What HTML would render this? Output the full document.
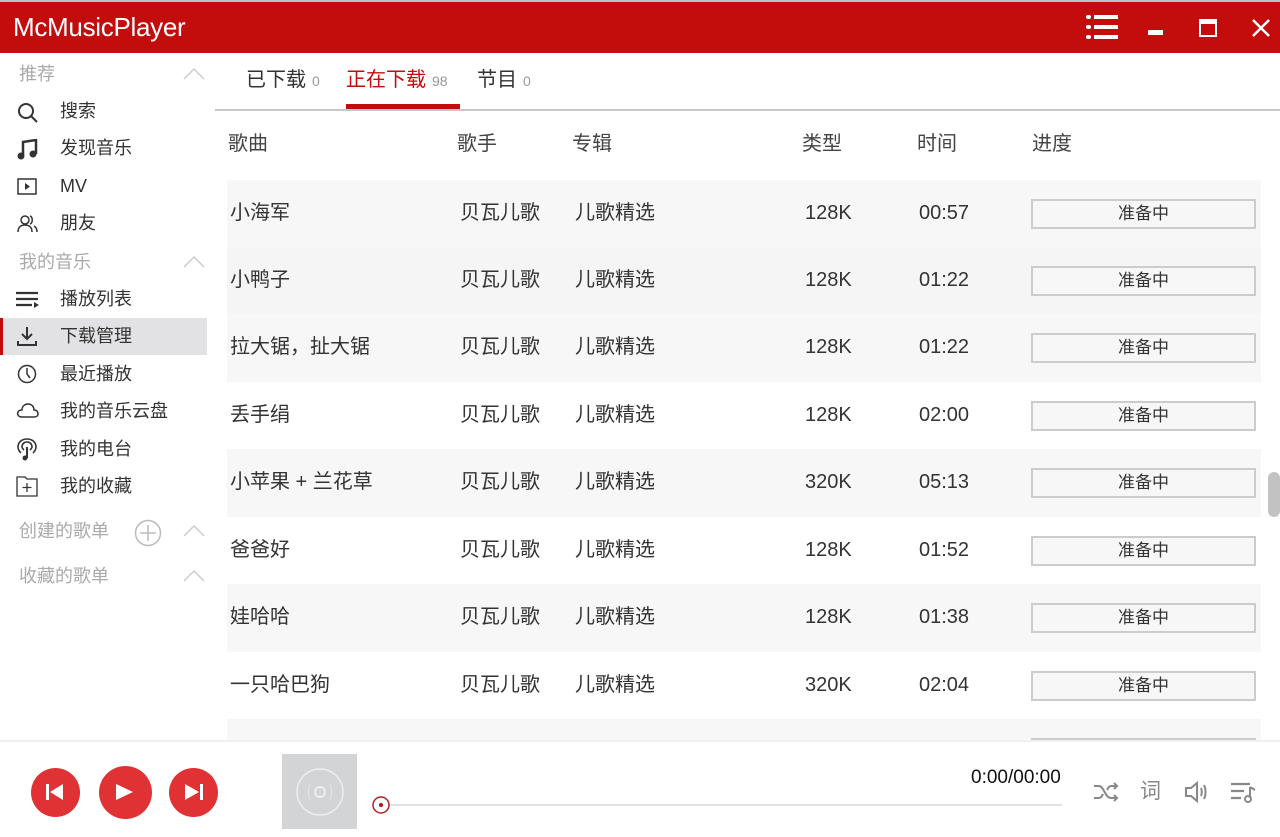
<!DOCTYPE html>
<html><head><meta charset="utf-8"><style>
*{margin:0;padding:0;box-sizing:border-box}
body{width:1280px;height:837px;overflow:hidden;background:#fff;font-family:"Liberation Sans","Noto Sans CJK SC",sans-serif;position:relative;color:#333}
.top{position:absolute;left:0;top:0;width:1280px;height:2px;background:#b8c4cc}
.bar{position:absolute;left:0;top:2px;width:1280px;height:51px;background:#c30d0d}
.title{position:absolute;left:13px;top:12px;color:#fff;font-size:26px;letter-spacing:-0.3px;line-height:30px}
.abs{position:absolute}
.side .h{position:absolute;left:19px;font-size:18px;color:#aaa;line-height:24px}
.side .i{position:absolute;left:60px;font-size:18px;color:#333;line-height:24px}
.chev{position:absolute;left:183px;width:22px;height:12px}
.tab{position:absolute;top:66px;font-size:20px;color:#333;line-height:28px}
.tab small{font-size:14px;color:#999;margin-left:6px}
.hd{position:absolute;top:130px;font-size:20px;color:#444;line-height:28px}
.row{position:absolute;left:227px;width:1034px;height:68px}
.row span{position:absolute;top:19px;font-size:20px;line-height:28px;color:#333}
.row .btn{position:absolute;left:804px;top:19px;width:225px;height:30px;border:2px solid #ccc;background:#f7f7f7;text-align:center;font-size:17px;line-height:26px;color:#333}
.circ{position:absolute;border-radius:50%;background:#e03234}
</style></head><body>
<div class="top"></div>
<div class="bar"></div>
<div class="title">McMusicPlayer</div>
<svg class="abs" style="left:1086px;top:14px" width="34" height="26"><g fill="#fff"><rect x="0" y="1" width="5" height="4" rx="2"/><rect x="0" y="11" width="5" height="4" rx="2"/><rect x="0" y="21" width="5" height="4" rx="2"/><rect x="8" y="1" width="24" height="4"/><rect x="8" y="11" width="24" height="4"/><rect x="8" y="21" width="24" height="4"/></g></svg>
<div class="abs" style="left:1148px;top:30px;width:15px;height:5px;background:#fff"></div>
<div class="abs" style="left:1199px;top:19px;width:18px;height:18px;border:2px solid #fff;border-top-width:5px"></div>
<svg class="abs" style="left:1251px;top:18px" width="20" height="20"><path d="M2 2L18 18M18 2L2 18" stroke="#fff" stroke-width="2.5"/></svg>

<div class="side">
<div class="h" style="top:62px">推荐</div>
<svg class="chev" style="top:68px"><path d="M1 11L11 1L21 11" stroke="#ccc" fill="none" stroke-width="1.5"/></svg>
<svg class="abs" style="left:17px;top:102px" width="22" height="22"><circle cx="9" cy="9" r="7" stroke="#333" stroke-width="2" fill="none"/><path d="M14 14L20 20" stroke="#333" stroke-width="2"/></svg>
<div class="i" style="top:99px">搜索</div>
<svg class="abs" style="left:17px;top:139px" width="22" height="22"><path d="M6 17V3L19 1V15" stroke="#333" stroke-width="2.5" fill="none"/><circle cx="4" cy="17" r="3.5" fill="#333"/><circle cx="16" cy="15" r="3.5" fill="#333"/></svg>
<div class="i" style="top:136px">发现音乐</div>
<svg class="abs" style="left:17px;top:178px" width="22" height="18"><rect x="1" y="1" width="18" height="15" fill="none" stroke="#333" stroke-width="1.5"/><path d="M8 5L13 8.5L8 12Z" fill="#333"/></svg>
<div class="i" style="top:174px">MV</div>
<svg class="abs" style="left:17px;top:214px" width="22" height="20"><circle cx="8" cy="6" r="4" fill="none" stroke="#333" stroke-width="1.5"/><path d="M1 18C1 13 4 11 8 11C12 11 15 13 15 18M13 2C16 3 16 9 13 10M17 12C19 13 20 15 20 18" fill="none" stroke="#333" stroke-width="1.5"/></svg>
<div class="i" style="top:211px">朋友</div>
<div class="h" style="top:250px">我的音乐</div>
<svg class="chev" style="top:256px"><path d="M1 11L11 1L21 11" stroke="#ccc" fill="none" stroke-width="1.5"/></svg>
<svg class="abs" style="left:16px;top:291px" width="24" height="18"><path d="M0 2H22M0 8H22M0 14H16" stroke="#333" stroke-width="2.2"/><path d="M18 11L23 14L18 17Z" fill="#333"/></svg>
<div class="i" style="top:287px">播放列表</div>
<div class="abs" style="left:0;top:318px;width:207px;height:37px;background:#e2e2e4"></div>
<div class="abs" style="left:0;top:318px;width:3px;height:37px;background:#c30d0d"></div>
<svg class="abs" style="left:17px;top:326px" width="22" height="22"><path d="M10 1V13M5 8L10 13L15 8M1 15V19H19V15" stroke="#333" stroke-width="2" fill="none"/></svg>
<div class="i" style="top:324px">下载管理</div>
<svg class="abs" style="left:17px;top:364px" width="22" height="22"><circle cx="10" cy="10" r="8.5" fill="none" stroke="#333" stroke-width="1.5"/><path d="M10 4V10L13 14" stroke="#333" stroke-width="1.5" fill="none"/></svg>
<div class="i" style="top:362px">最近播放</div>
<svg class="abs" style="left:16px;top:402px" width="24" height="18"><path d="M6 15C2 15 1 12 2 10C3 8 5 8 6 8C6 4 9 2 12 2C16 2 18 5 18 8C21 8 22 10 22 12C22 14 20 15 18 15Z" fill="none" stroke="#333" stroke-width="1.5"/></svg>
<div class="i" style="top:399px">我的音乐云盘</div>
<svg class="abs" style="left:17px;top:438px" width="22" height="24"><path d="M4 15C2 13 1 11 1 9C1 4 5 1 10 1C15 1 19 4 19 9C19 11 18 13 16 15M7 12C6 11 5 10 5 9C5 6 7 4 10 4C13 4 15 6 15 9C15 10 14 11 13 12" fill="none" stroke="#333" stroke-width="1.6"/><path d="M10 9V20" stroke="#333" stroke-width="2"/><circle cx="8" cy="20" r="2.5" fill="#333"/></svg>
<div class="i" style="top:437px">我的电台</div>
<svg class="abs" style="left:16px;top:476px" width="24" height="22"><path d="M1 1H9L11 3H21V20H1Z" fill="none" stroke="#333" stroke-width="1.3"/><path d="M11 7V16M6.5 11.5H15.5" stroke="#333" stroke-width="1.3"/></svg>
<div class="i" style="top:474px">我的收藏</div>
<div class="h" style="top:519px">创建的歌单</div>
<svg class="abs" style="left:134px;top:519px" width="28" height="28"><circle cx="14" cy="14" r="12.5" fill="none" stroke="#bbb" stroke-width="1.5"/><path d="M14 6V22M6 14H22" stroke="#bbb" stroke-width="1.5"/></svg>
<svg class="chev" style="top:525px"><path d="M1 11L11 1L21 11" stroke="#ccc" fill="none" stroke-width="1.5"/></svg>
<div class="h" style="top:564px">收藏的歌单</div>
<svg class="chev" style="top:570px"><path d="M1 11L11 1L21 11" stroke="#ccc" fill="none" stroke-width="1.5"/></svg>
</div>

<div class="tab" style="left:246px">已下载<small>0</small></div>
<div class="tab" style="left:346px;color:#c30d0d">正在下载<small>98</small></div>
<div class="tab" style="left:477px">节目<small>0</small></div>
<div class="abs" style="left:215px;top:109px;width:1065px;height:2px;background:#c8c8c8"></div>
<div class="abs" style="left:346px;top:104px;width:114px;height:5px;background:#c30d0d"></div>

<div class="hd" style="left:228px">歌曲</div>
<div class="hd" style="left:457px">歌手</div>
<div class="hd" style="left:572px">专辑</div>
<div class="hd" style="left:802px">类型</div>
<div class="hd" style="left:917px">时间</div>
<div class="hd" style="left:1032px">进度</div>

<div class="row" style="top:180px;background:#f7f7f7"><span style="left:3px">小海军</span><span style="left:233px">贝瓦儿歌</span><span style="left:348px">儿歌精选</span><span style="left:578px">128K</span><span style="left:692px">00:57</span><div class="btn">准备中</div></div>
<div class="row" style="top:247px;background:#f5f5f5"><span style="left:3px">小鸭子</span><span style="left:233px">贝瓦儿歌</span><span style="left:348px">儿歌精选</span><span style="left:578px">128K</span><span style="left:692px">01:22</span><div class="btn">准备中</div></div>
<div class="row" style="top:314px;background:#f7f7f7"><span style="left:3px">拉大锯，扯大锯</span><span style="left:233px">贝瓦儿歌</span><span style="left:348px">儿歌精选</span><span style="left:578px">128K</span><span style="left:692px">01:22</span><div class="btn">准备中</div></div>
<div class="row" style="top:382px;background:#fff"><span style="left:3px">丢手绢</span><span style="left:233px">贝瓦儿歌</span><span style="left:348px">儿歌精选</span><span style="left:578px">128K</span><span style="left:692px">02:00</span><div class="btn">准备中</div></div>
<div class="row" style="top:449px;background:#f7f7f7"><span style="left:3px">小苹果 + 兰花草</span><span style="left:233px">贝瓦儿歌</span><span style="left:348px">儿歌精选</span><span style="left:578px">320K</span><span style="left:692px">05:13</span><div class="btn">准备中</div></div>
<div class="row" style="top:517px;background:#fff"><span style="left:3px">爸爸好</span><span style="left:233px">贝瓦儿歌</span><span style="left:348px">儿歌精选</span><span style="left:578px">128K</span><span style="left:692px">01:52</span><div class="btn">准备中</div></div>
<div class="row" style="top:584px;background:#f7f7f7"><span style="left:3px">娃哈哈</span><span style="left:233px">贝瓦儿歌</span><span style="left:348px">儿歌精选</span><span style="left:578px">128K</span><span style="left:692px">01:38</span><div class="btn">准备中</div></div>
<div class="row" style="top:652px;background:#fff"><span style="left:3px">一只哈巴狗</span><span style="left:233px">贝瓦儿歌</span><span style="left:348px">儿歌精选</span><span style="left:578px">320K</span><span style="left:692px">02:04</span><div class="btn">准备中</div></div>
<div class="row" style="top:719px;height:21px;background:#f7f7f7"><div class="abs" style="left:804px;top:19px;width:225px;height:2px;background:#ccc"></div></div>
<div class="abs" style="left:1268px;top:472px;width:12px;height:45px;background:#c2c2c2;border-radius:6px"></div>

<div class="abs" style="left:0;top:740px;width:1280px;height:2px;background:#f0f0f0"></div>
<div class="circ" style="left:31px;top:768px;width:49px;height:49px"></div>
<div class="circ" style="left:99px;top:766px;width:53px;height:53px"></div>
<div class="circ" style="left:169px;top:768px;width:49px;height:49px"></div>
<svg class="abs" style="left:45px;top:782px" width="22" height="20"><rect x="1" y="2" width="3" height="16" fill="#fff"/><path d="M18 2V18L5 10Z" fill="#fff"/></svg>
<svg class="abs" style="left:115px;top:782px" width="22" height="20"><path d="M1 2V18L18 10Z" fill="#fff"/></svg>
<svg class="abs" style="left:183px;top:782px" width="22" height="20"><rect x="17" y="2" width="3" height="16" fill="#fff"/><path d="M2 2V18L16 10Z" fill="#fff"/></svg>
<div class="abs" style="left:282px;top:754px;width:75px;height:75px;background:#d3d4d6"></div>
<svg class="abs" style="left:282px;top:754px" width="75" height="75"><circle cx="38" cy="38" r="23" fill="none" stroke="#eee" stroke-width="1.5"/><circle cx="38" cy="38" r="5" fill="none" stroke="#eee" stroke-width="2"/><path d="M28 30C26 35 26 41 28 46M48 30C50 35 50 41 48 46" fill="none" stroke="#e4e4e4" stroke-width="1"/></svg>
<div class="abs" style="left:390px;top:804px;width:672px;height:2px;background:#e2e2e2"></div>
<svg class="abs" style="left:370px;top:794px" width="22" height="22"><circle cx="11" cy="11" r="8" fill="#fff" stroke="#b31f24" stroke-width="1.5"/><circle cx="11" cy="11" r="2" fill="#c30d0d"/></svg>
<div class="abs" style="left:971px;top:766px;font-size:19px;color:#111;line-height:24px">0:00/00:00</div>
<svg class="abs" style="left:1093px;top:782px" width="26" height="20"><path d="M1 4H6C11 4 12 16 18 16H24M1 16H6C8 16 9 14 10 12M14 8C15 6 16 4 18 4H24M21 1L24 4L21 7M21 13L24 16L21 19" fill="none" stroke="#888" stroke-width="2"/></svg>
<div class="abs" style="left:1140px;top:778px;font-size:21px;color:#888;line-height:28px">词</div>
<svg class="abs" style="left:1184px;top:781px" width="26" height="22"><path d="M2 7H7L13 2V20L7 15H2Z" fill="none" stroke="#888" stroke-width="2"/><path d="M17 7C18 9 18 13 17 15M20 4C22 8 22 14 20 18" fill="none" stroke="#888" stroke-width="2"/></svg>
<svg class="abs" style="left:1230px;top:781px" width="28" height="22"><path d="M1 3H20M1 10H14M1 17H11" stroke="#888" stroke-width="2.2"/><path d="M20 6V17" stroke="#888" stroke-width="2"/><circle cx="18" cy="18" r="3" fill="none" stroke="#888" stroke-width="2"/><path d="M20 6L25 9" stroke="#888" stroke-width="2"/></svg>
</body></html>
